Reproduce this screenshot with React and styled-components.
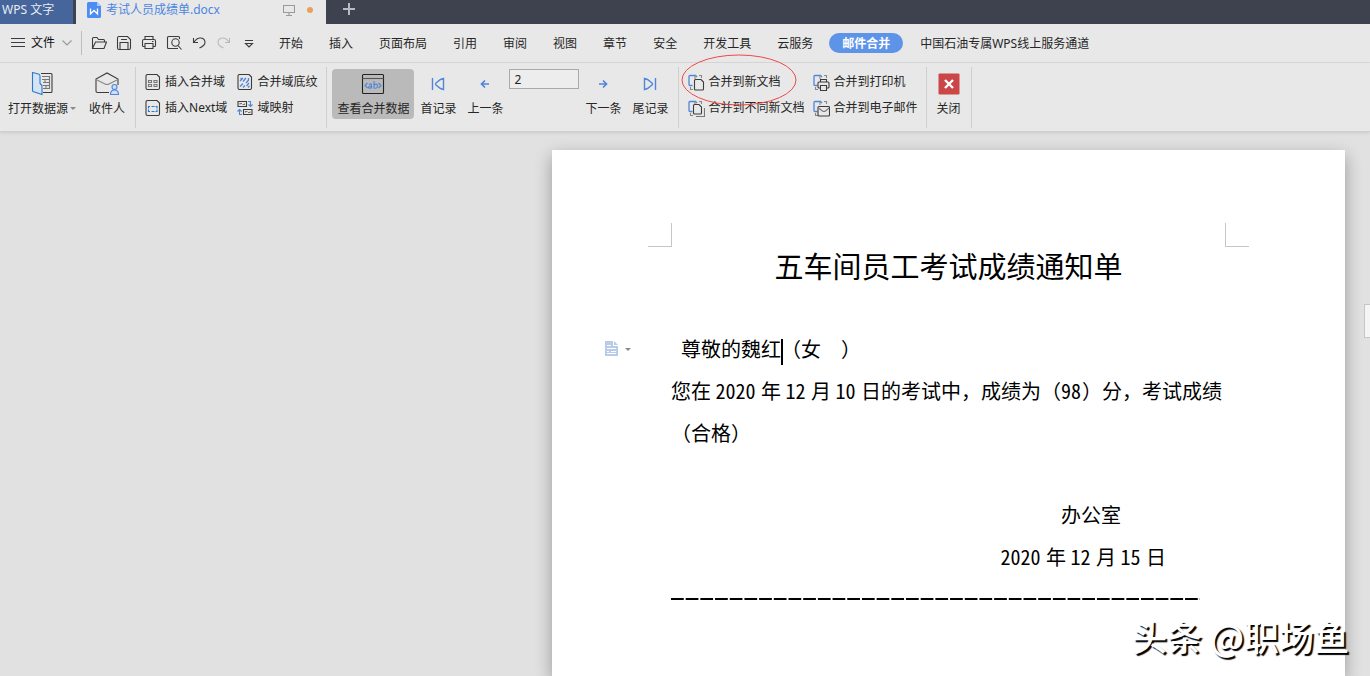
import React, { useState } from "react";

import styled, { createGlobalStyle } from "styled-components";

const GlobalStyle = createGlobalStyle`
  * {
    box-sizing: border-box;
  }

  body {
    margin: 0;
    background: #e1e1e1;
    color: #262626;
    font-family: "Noto Sans", "Noto Sans CJK SC", sans-serif;
    font-size: 12px;
    line-height: 16px;
  }

  button {
    margin: 0;
    padding: 0;
    border: 0;
    background: none;
    color: inherit;
    font: inherit;
    white-space: nowrap;
    cursor: pointer;
  }

  svg {
    display: block;
    flex: none;
  }
`;

const DARK = "#3c3c3c";
const BLUE = "#4f86d9";

const Icon = ({ w = 16, h = 16, color = DARK, children }) => (
  <svg
    width={w}
    height={h}
    viewBox={`0 0 ${w} ${h}`}
    fill="none"
    stroke={color}
    strokeWidth="1.1"
    aria-hidden="true"
  >
    {children}
  </svg>
);

/* tab bar icons */
const WriterLogo = () => (
  <svg width="14" height="16" viewBox="0 0 14 16" aria-hidden="true">
    <path d="M1.5 0H10l4 4v10.500a1.500 1.500 0 0 1-1.500 1.500h-11A1.500 1.500 0 0 1 0 14.500v-13A1.500 1.500 0 0 1 1.500 0Z" fill="#4d8cf5" />
    <path d="M10 0l4 4h-4Z" fill="#a9c8fb" />
    <path d="M3.500 6.500V12L7 8.500l3.500 3.500V6.500" fill="none" stroke="#fff" strokeWidth="1.300" />
  </svg>
);

const ScreenIcon = () => (
  <Icon w={12} h={12} color="#9a9a9a">
    <path d="M.5 1.500h11v7H.5ZM6 8.500v3M3 11.500h6" />
  </Icon>
);

/* menu bar icons */
const OpenIcon = () => (
  <Icon>
    <path d="M1.500 13.500V3.500q0-1 1-1H6l1.500 2h5q1 0 1 1v1.500M1.500 13.500l3-6.500h11l-2.500 6.500Z" />
  </Icon>
);

const SaveIcon = () => (
  <Icon>
    <path d="M3 1.500h8.500l3 3V13q0 1.500-1.500 1.500H3q-1.500 0-1.500-1.500V3Q1.500 1.500 3 1.500ZM4 14V7.500h8V14M5 4.500h6" />
  </Icon>
);

const PrintIcon = () => (
  <Icon>
    <path d="M4 4.500v-3h8v3M4 11.500H2.500q-1 0-1-1V6q0-1.500 1.500-1.500h10q1.500 0 1.500 1.500v4.500q0 1-1 1H12M4 8.500h8v5H4ZM11 6.500h1.500" />
  </Icon>
);

const PreviewIcon = () => (
  <Icon>
    <path d="M6 13.500H2.500q-1 0-1-1v-10q0-1 1-1h10q1 0 1 1V4" />
    <circle cx="9.500" cy="7.500" r="3.700" />
    <path d="M12 10.500l3.500 4M6 13.500h6" />
  </Icon>
);

const UndoIcon = () => (
  <Icon>
    <path d="M2.500 3v4.500H7M3 7q3-4.500 7-4 4 .5 4 4.500 0 3-5.500 5.500" />
  </Icon>
);

const RedoIcon = () => (
  <Icon color="#b9b9b9">
    <path d="M13.500 3v4.500H9M13 7q-3-4.500-7-4-4 .5-4 4.500 0 3 5.500 5.500" />
  </Icon>
);

const MoreIcon = () => (
  <Icon>
    <path d="M4 5.500h8M4.500 8.500h7L8 12Z" />
  </Icon>
);

/* ribbon icons */
const DataSourceIcon = () => (
  <Icon w={22} h={26}>
    <path d="M10 2.500h10q1 0 1 1v17q0 1-1 1h-8" />
    <path d="M11 5.500h7.500v3H11M12 11.500h6.500v-3M12 14.500h6.500v-3M12 17.500h6.500v-3M14 8.500v3M15 14.500v3" stroke="#777" />
    <path d="M1.500 1.500l6 1.500q1.500.5 1.500 2v7.500l2 2v9l-9-3q-.5-.5-.5-1Z" fill="#d5e3f5" stroke="#2679d0" />
  </Icon>
);

const RecipientsIcon = () => (
  <Icon w={26} h={26}>
    <path d="M15 21.500H3.500q-1.500 0-1.500-1.500V8l11-6 11 6v6" />
    <path d="M2 8.500l9 4.500q2 1 4 0l9-4.500" stroke="#888" />
    <circle cx="20.500" cy="16" r="2.500" stroke={BLUE} fill="#cfdff5" />
    <path d="M16.500 23.500q0-4.500 4-4.500t4 4.500Z" stroke={BLUE} fill="#cfdff5" />
  </Icon>
);

const Sheet = () => (
  <path d="M2.500.5h9.500l2.500 2.500v11q0 1.500-1.500 1.500H2.500Q1 15.500 1 14V2Q1 .5 2.500.5Z" />
);

const InsertFieldIcon = () => (
  <Icon>
    <Sheet />
    <path d="M3.500 6.500h3v2h-3ZM9 6.500h3v2H9ZM3.500 10.500h3v2h-3ZM9 10.500h3v2H9Z" stroke="#777" />
  </Icon>
);

const InsertNextIcon = () => (
  <Icon>
    <Sheet />
    <path d="M5 6.500H3.500v2M3.500 9.500v2H5M10.500 6.500H12v2M12 9.500v2h-1.500M6.500 6.500h3M6.500 11.500h3" stroke="#2679d0" />
  </Icon>
);

const ShadingIcon = () => (
  <Icon>
    <Sheet />
    <path d="M6 4L3 7M9 4L6 7.500M12 5.500L9 9M6 9.500l-3 3M12 9l-2.500 3M12.500 12L11 13.500M8 11.500L6 13.500M3.500 4.500h1M11.500 4v2" stroke={BLUE} strokeWidth="1.300" />
  </Icon>
);

const MappingIcon = () => (
  <Icon>
    <path d="M1 1.500h8.500v5H1ZM6.500 9.500H15v5H6.500Z" />
    <path d="M3 4.500V3.500h2M5.500 4.500h2v-1M8.500 12.500v-1h2M11 12.500h2v-1" stroke="#777" />
    <path d="M11 1.500h2.500v5M11.500 4.500l2 2 2-2M5 14.500H2.500v-5M.5 11.500l2-2 2 2" stroke={BLUE} />
  </Icon>
);

const ViewDataIcon = () => (
  <Icon w={24} h={22} color="#222">
    <rect x="1.500" y="1.500" width="21" height="19" rx="1" />
    <path d="M1.500 5.500h21" stroke="#555" />
    <path d="M6.500 10l-2.500 2.500 2.500 2.500M17.500 10l2.500 2.500-2.500 2.500" stroke={BLUE} />
    <path d="M8 11.500q2.500-1.500 2.500.5v3.500M10.500 13Q7.500 13 7.500 14.500q.5 1.500 3 0M13 8v7.500M13 12q3-2 3.500.5 0 3.500-3.500 2.500" stroke={BLUE} />
  </Icon>
);

const FirstIcon = () => (
  <Icon w={14} h={14} color={BLUE}>
    <path d="M1.500 1v12M12.500 1.500v11L9.500 11.500 5 8q-1-1 0-2l4.500-3.500Z" strokeWidth="1.400" />
  </Icon>
);

const LastIcon = () => (
  <Icon w={14} h={14} color={BLUE}>
    <path d="M12.500 1v12M1.500 1.500v11l3-1L9 8q1-1 0-2L4.500 2.500Z" strokeWidth="1.400" />
  </Icon>
);

const PrevIcon = () => (
  <Icon w={14} h={14} color={BLUE}>
    <path d="M11 7H4M7 3.500L3.500 7 7 10.500" strokeWidth="1.700" />
  </Icon>
);

const NextIcon = () => (
  <Icon w={14} h={14} color={BLUE}>
    <path d="M3 7h7M7 3.500L10.500 7 7 10.500" strokeWidth="1.700" />
  </Icon>
);

const MergeBase = ({ children }) => (
  <Icon w={17} h={17}>
    <path d="M4.500 11.500H2q-1 0-1-1v-8q0-1 1-1h5.500L9 3" stroke={BLUE} strokeWidth="1.300" />
    <path d="M7 1.500V5M11 1.500h2.500V4M2.500 13v2.500H5" stroke="#888" />
    {children}
  </Icon>
);

const MergeNewIcon = () => (
  <MergeBase>
    <path d="M7.500 5.500H13l2.500 2.500v7q0 1-1 1h-7q-1 0-1-1V6.500q0-1 1-1Z" fill="#e8e8e8" />
  </MergeBase>
);

const MergeManyIcon = () => (
  <MergeBase>
    <path d="M16.500 8v8.500H8" stroke="#777" />
    <path d="M6.500 4.500H11L13.500 7v6q0 1-1 1h-6q-1 0-1-1V5.500q0-1 1-1Z" fill="#e8e8e8" />
  </MergeBase>
);

const MergePrintIcon = () => (
  <MergeBase>
    <path d="M7.500 8V5.500h6V8M7.500 14H6q-1 0-1-1V9q0-1 1-1h9q1 0 1 1v4q0 1-1 1h-1.500M7.500 11.500h6v5h-6Z" fill="#e8e8e8" />
  </MergeBase>
);

const MergeMailIcon = () => (
  <MergeBase>
    <path d="M6 6.500h9.500q1 0 1 1V15q0 1-1 1H6q-1 0-1-1V7.500q0-1 1-1Z" fill="#e8e8e8" />
    <path d="M5.500 8l4 3q1.500 1 3 0l3.500-3" stroke="#777" />
  </MergeBase>
);

const CloseIcon = () => (
  <svg width="22" height="22" viewBox="0 0 22 22" aria-hidden="true">
    <rect x=".5" y=".5" width="21" height="21" rx="1" fill="#cb4646" />
    <path d="M7 7l8 8M15 7l-8 8" stroke="#fff" strokeWidth="2.400" />
  </svg>
);

const quickActions = [
  ["打开", OpenIcon],
  ["保存", SaveIcon],
  ["打印", PrintIcon],
  ["打印预览", PreviewIcon],
  ["撤销", UndoIcon],
  ["恢复", RedoIcon],
  ["更多", MoreIcon],
];

const menus = [
  "开始",
  "插入",
  "页面布局",
  "引用",
  "审阅",
  "视图",
  "章节",
  "安全",
  "开发工具",
  "云服务",
  "邮件合并",
  "中国石油专属WPS线上服务通道",
];

const App = () => {
  const [active, setActive] = useState("邮件合并");
  const [record, setRecord] = useState(2);

  const move = (step) => {
    setRecord((prev) => Math.max(1, Number(prev) + step));
  };

  return (
    <Window>
      <GlobalStyle />

      {/* tabs */}
      <TabBar>
        <HomeTab>WPS 文字</HomeTab>
        <FileTab>
          <WriterLogo />
          <FileName>考试人员成绩单.docx</FileName>
          <ScreenIcon />
          <UnsavedDot />
        </FileTab>
        <NewTab aria-label="新建">
          <Icon w={14} h={14} color="#b9bbc0">
            <path d="M7 1v12M1 7h12" strokeWidth="2" />
          </Icon>
        </NewTab>
      </TabBar>

      {/* menu */}
      <MenuBar>
        <FileMenu>
          <Icon w={14} h={12}>
            <path d="M0 1.500h14M0 5.500h14M0 9.500h14" />
          </Icon>
          文件
          <Icon w={12} h={8} color="#999">
            <path d="M1.500 1.500L6 6l4.500-4.500" />
          </Icon>
        </FileMenu>
        <QuickBar>
          {quickActions.map(([label, Glyph]) => (
            <QuickButton key={label} aria-label={label}>
              <Glyph />
            </QuickButton>
          ))}
        </QuickBar>
        <MenuList>
          {menus.map((name) => (
            <MenuButton
              key={name}
              $active={name === active}
              onClick={() => setActive(name)}
            >
              {name}
            </MenuButton>
          ))}
        </MenuList>
      </MenuBar>

      {/* mail merge ribbon */}
      <Ribbon>
        <Group $gap={13} $left={8} $right={10}>
          <BigButton>
            <DataSourceIcon />
            <span>
              打开数据源
              <Caret />
            </span>
          </BigButton>
          <BigButton>
            <RecipientsIcon />
            收件人
          </BigButton>
        </Group>

        <Group $gap={10} $left={9} $right={9}>
          <Column>
            <SmallButton>
              <InsertFieldIcon />
              插入合并域
            </SmallButton>
            <SmallButton>
              <InsertNextIcon />
              插入Next域
            </SmallButton>
          </Column>
          <Column>
            <SmallButton>
              <ShadingIcon />
              合并域底纹
            </SmallButton>
            <SmallButton>
              <MappingIcon />
              域映射
            </SmallButton>
          </Column>
        </Group>

        <Group $gap={6} $left={5} $right={10}>
          <BigButton $pressed>
            <ViewDataIcon />
            查看合并数据
          </BigButton>
          <Records>
            <BigButton onClick={() => setRecord(1)}>
              <FirstIcon />
              首记录
            </BigButton>
            <BigButton onClick={() => move(-1)}>
              <PrevIcon />
              上一条
            </BigButton>
          </Records>
          <RecordInput
            aria-label="记录"
            value={record}
            onChange={(e) => setRecord(e.target.value)}
          />
          <Records>
            <BigButton onClick={() => move(1)}>
              <NextIcon />
              下一条
            </BigButton>
            <BigButton>
              <LastIcon />
              尾记录
            </BigButton>
          </Records>
        </Group>

        <Group $gap={9} $left={9} $right={8}>
          <Column>
            <SmallButton $gap={3}>
              <MergeNewIcon />
              合并到新文档
              <RedCircle viewBox="0 0 116 52" aria-hidden="true">
                <ellipse cx="58" cy="26" rx="57" ry="25" fill="none" stroke="#f04848" />
              </RedCircle>
            </SmallButton>
            <SmallButton $gap={3}>
              <MergeManyIcon />
              合并到不同新文档
            </SmallButton>
          </Column>
          <Column>
            <SmallButton $gap={3}>
              <MergePrintIcon />
              合并到打印机
            </SmallButton>
            <SmallButton $gap={3}>
              <MergeMailIcon />
              合并到电子邮件
            </SmallButton>
          </Column>
        </Group>

        <Group $gap={0} $left={10} $right={10}>
          <BigButton>
            <CloseIcon />
            关闭
          </BigButton>
        </Group>
      </Ribbon>

      {/* document */}
      <Workspace>
        <Page>
          <Corners>
            <Corner $side="right" />
            <Corner $side="left" />
          </Corners>
          <Content>
            <Title>五车间员工考试成绩通知单</Title>
            <Greeting>
              <PasteOptions aria-label="段落布局">
                <svg width="14" height="16" viewBox="0 0 14 16" aria-hidden="true">
                  <path d="M0 0h8v5h5v10H0Z" fill="#b8cbe8" />
                  <path d="M9 0l4 4H9Z" fill="#b8cbe8" />
                  <path d="M2 4.500h4M2 7.500h9M2 10.500h2M6 10.500h5M2 12.500h9" stroke="#fff" />
                </svg>
                <Caret />
              </PasteOptions>
              尊敬的魏红
              <TextCursor />
              （女　）
            </Greeting>
            <Paragraph>
              您在 <Num>2020</Num> 年 <Num>12</Num> 月 <Num>10</Num>{" "}
              日的考试中，成绩为（<Num>98</Num>）分，考试成绩
            </Paragraph>
            <Paragraph>（合格）</Paragraph>
            <Signature>
              <Office>办公室</Office>
              <Paragraph>
                <Num>2020</Num> 年 <Num>12</Num> 月 <Num>15</Num> 日
              </Paragraph>
            </Signature>
            <CutLine />
          </Content>
        </Page>
        <SideHandle aria-label="展开任务窗格" />
      </Workspace>

      <Watermark>头条 @职场鱼</Watermark>
    </Window>
  );
};

export default App;

const Window = styled.div`
  position: relative;
  display: flex;
  flex-direction: column;
  min-height: 100vh;
  overflow: hidden;
`;

const TabBar = styled.header`
  display: flex;
  height: 24px;
  background: #3e414e;
`;

const HomeTab = styled.button`
  width: 73px;
  padding: 0 0 4px 2px;
  margin-right: 3px;
  background: #45659b;
  color: #e8ecf3;
  text-align: left;
`;

const FileTab = styled.div`
  display: flex;
  align-items: center;
  width: 250px;
  padding: 0 13px 4px 11px;
  background: #e8e8e8;
  color: #4a86e0;
`;

const FileName = styled.span`
  flex: 1;
  padding-left: 5px;
`;

const UnsavedDot = styled.span`
  width: 6px;
  height: 6px;
  margin-left: 12px;
  border-radius: 50%;
  background: #e8a05c;
`;

const NewTab = styled.button`
  display: flex;
  justify-content: center;
  width: 46px;
  padding-top: 2px;
`;

const MenuBar = styled.nav`
  display: flex;
  align-items: center;
  height: 39px;
  background: #e8e8e8;
  border-bottom: 1px solid #d9d9d9;
`;

const FileMenu = styled.button`
  display: flex;
  align-items: center;
  gap: 6px;
  height: 24px;
  padding: 0 8px 0 11px;
  border-right: 1px solid #bdbdbd;
  color: #111;
`;

const QuickBar = styled.div`
  display: flex;
  padding: 0 5px 0 4px;
`;

const QuickButton = styled.button`
  display: flex;
  justify-content: center;
  width: 25px;
`;

const MenuList = styled.div`
  display: flex;
  align-items: center;
`;

const MenuButton = styled.button`
  height: 20px;
  padding: 1px 13px 0;
  margin: ${({ $active }) => ($active ? "0 4px 0 3px" : "0")};
  border-radius: 10px;
  background: ${({ $active }) => ($active ? "#5d94e8" : "none")};
  color: ${({ $active }) => ($active ? "#fff" : "inherit")};
  font-weight: ${({ $active }) => ($active ? "bold" : "normal")};
`;

const Ribbon = styled.section`
  display: flex;
  height: 69px;
  padding: 4px 0 3px;
  background: #e8e8e8;
  border-bottom: 1px solid #d0d0d0;
  box-shadow: 0 1px 3px rgba(0, 0, 0, 0.1);
`;

const Group = styled.div`
  display: flex;
  align-items: flex-start;
  gap: ${({ $gap }) => $gap}px;
  padding: 2px ${({ $right }) => $right}px 0 ${({ $left }) => $left}px;
  border-right: 1px solid #cfcfcf;
`;

const BigButton = styled.button`
  display: flex;
  flex-direction: column;
  align-items: center;
  gap: 2px;
  height: 50px;
  padding: ${({ $pressed }) => ($pressed ? "0 5px 2px" : "0 0 2px")};
  border-radius: 4px;
  background: ${({ $pressed }) => ($pressed ? "#bababa" : "none")};

  svg {
    margin: auto;
  }
`;

const Column = styled.div`
  display: flex;
  flex-direction: column;
`;

const SmallButton = styled.button`
  position: relative;
  display: flex;
  align-items: center;
  gap: ${({ $gap = 4 }) => $gap}px;
  height: 26px;
`;

const Records = styled.div`
  display: flex;
  gap: 11px;
`;

const RecordInput = styled.input`
  width: 70px;
  height: 20px;
  padding: 0 4px;
  border: 1px solid #a9a9a9;
  background: #ededed;
  color: #222;
  font: inherit;
`;

const Caret = styled.i`
  display: inline-block;
  margin-left: 2px;
  border: 3px solid transparent;
  border-top-color: #8a8a8a;
  border-bottom: 0;
  vertical-align: 3px;
`;

const RedCircle = styled.svg`
  position: absolute;
  top: -15px;
  left: -7px;
  width: 116px;
  height: 52px;
  z-index: 1;
  pointer-events: none;
`;

const Workspace = styled.main`
  display: flex;
  flex: 1;
  justify-content: flex-end;
  padding-top: 18px;
`;

const Page = styled.article`
  width: 100%;
  max-width: 793px;
  padding-top: 73px;
  background: #fff;
  color: #000;
  box-shadow: 0 6px 16px rgba(0, 0, 0, 0.32);
  font-family: "Noto Sans CJK SC", sans-serif;
  font-size: 20px;
  line-height: 42px;
  text-spacing-trim: space-all;
`;

const Corners = styled.div`
  display: flex;
  justify-content: space-between;
  padding: 0 96px;
`;

const Corner = styled.span`
  width: 24px;
  height: 24px;
  border-bottom: 1px solid #c6c6c6;
  border-${({ $side }) => $side}: 1px solid #c6c6c6;
`;

const Content = styled.div`
  padding: 0 119px;
`;

const Title = styled.h1`
  margin: 0 0 45px;
  font-size: 29px;
  font-weight: normal;
  line-height: 36px;
  text-align: center;
`;

const Paragraph = styled.p`
  margin: 0;
`;

const Greeting = styled(Paragraph)`
  position: relative;
  padding-left: 10px;
`;

const PasteOptions = styled.button`
  position: absolute;
  top: 13px;
  left: -66px;
  display: flex;
  align-items: center;
  gap: 4px;
`;

const TextCursor = styled.span`
  display: inline-block;
  width: 2px;
  height: 26px;
  margin-right: -2px;
  background: #000;
  vertical-align: middle;
`;

const Num = styled.span`
  margin-right: 1px;
  font-family: "Noto Sans Mono CJK SC", "Noto Sans CJK SC", monospace;
`;

const Signature = styled.div`
  padding: 40px 60px 0 0;
  text-align: right;
`;

const Office = styled(Paragraph)`
  padding-right: 45px;
`;

const CutLine = styled.hr`
  width: 100%;
  max-width: 529px;
  height: 2px;
  margin: 20px 0;
  border: 0;
  background: linear-gradient(to right, #000 86%, transparent 86%) 0 0 /
    calc(100% / 36) 100%;
`;

const SideHandle = styled.button`
  width: 6px;
  height: 34px;
  margin: 154px 0 0 19px;
  border: 1px solid #c6c6c6;
  border-right: 0;
  background: #f5f5f5;
`;

const Watermark = styled.div`
  position: absolute;
  right: 21px;
  bottom: 19px;
  color: #fff;
  font-family: "Noto Sans CJK SC", sans-serif;
  font-size: 35px;
  font-weight: 500;
  line-height: 42px;
  text-shadow: 2px 2px 1px #000;
`;
